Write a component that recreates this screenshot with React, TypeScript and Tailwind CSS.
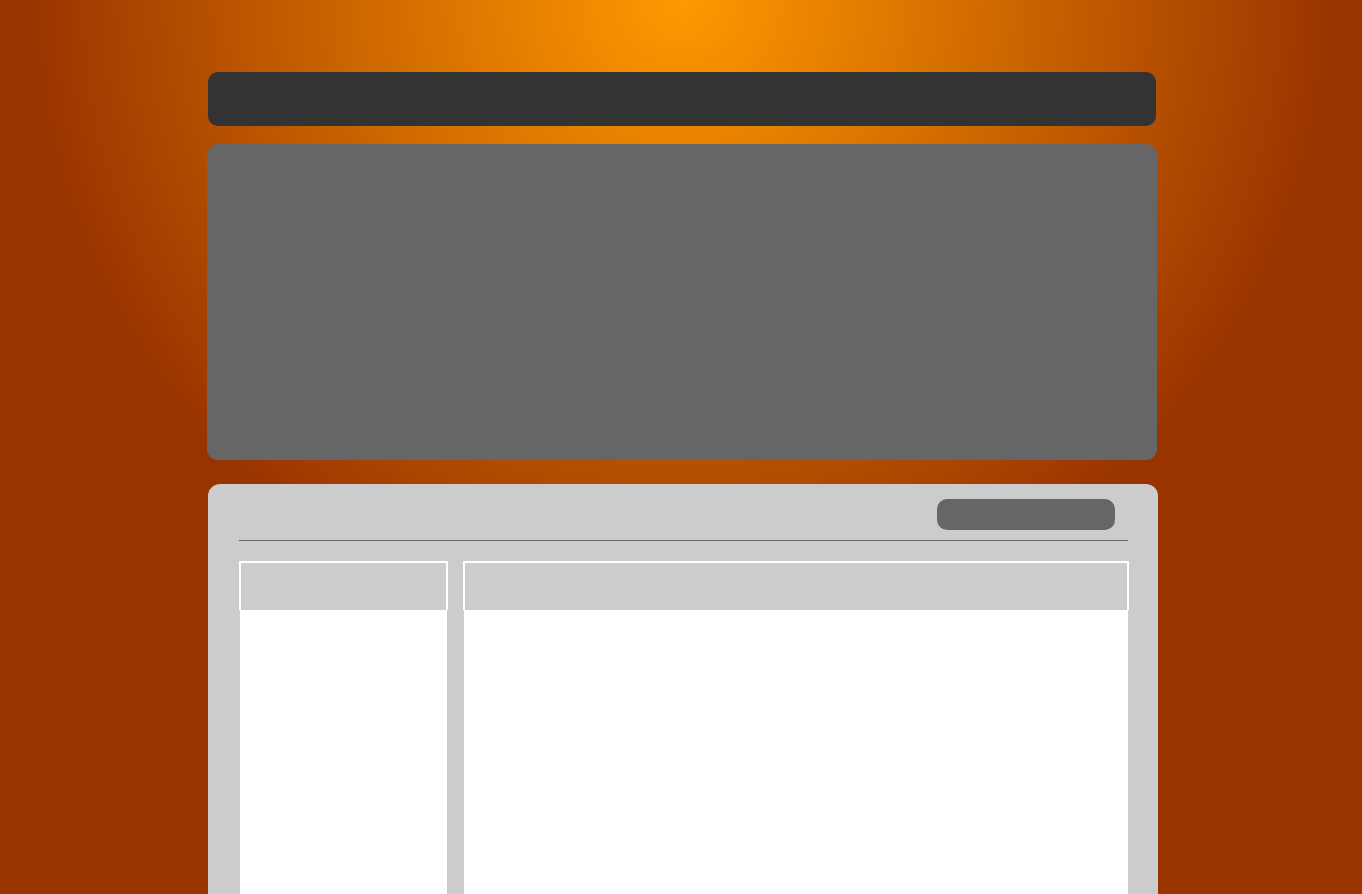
export default function App() {
  return (
    <div className="min-h-[894px] h-[894px] overflow-hidden bg-[#993300] bg-[radial-gradient(ellipse_660px_650px_at_50%_0%,#ff9900_0%,#993300_100%)] font-['Liberation_Sans',sans-serif]">
      <div className="mx-auto w-[954px] pl-[4px] pt-[72px]">
        {/* top bar */}
        <div className="h-[54px] w-[948px] rounded-[10px] bg-[#333333]" />

        {/* banner */}
        <div className="mt-[18px] h-[316px] w-[950px] -ml-px rounded-[11px] bg-[#666666]" />

        {/* main panel */}
        <div className="mt-[24px] h-[600px] w-[950px] rounded-t-[12px] bg-[#cccccc] pt-[15px] pl-[31px] pr-[29px]">
          <div className="flex justify-end pr-[14px]">
            <div className="h-[31px] w-[178px] rounded-[10px] bg-[#666666]" />
          </div>
          <div className="mt-[10px] mr-px h-px bg-[#666666]" />

          <div className="mt-[20px] flex gap-[15px]">
            <div className="w-[209px] shrink-0">
              <div className="h-[49px] border-2 border-b-0 border-white bg-[#cccccc]" />
              <div className="mx-px h-[400px] bg-white" />
            </div>
            <div className="flex-1">
              <div className="h-[49px] border-2 border-b-0 border-white bg-[#cccccc]" />
              <div className="mx-px h-[400px] bg-white" />
            </div>
          </div>
        </div>
      </div>
    </div>
  );
}
